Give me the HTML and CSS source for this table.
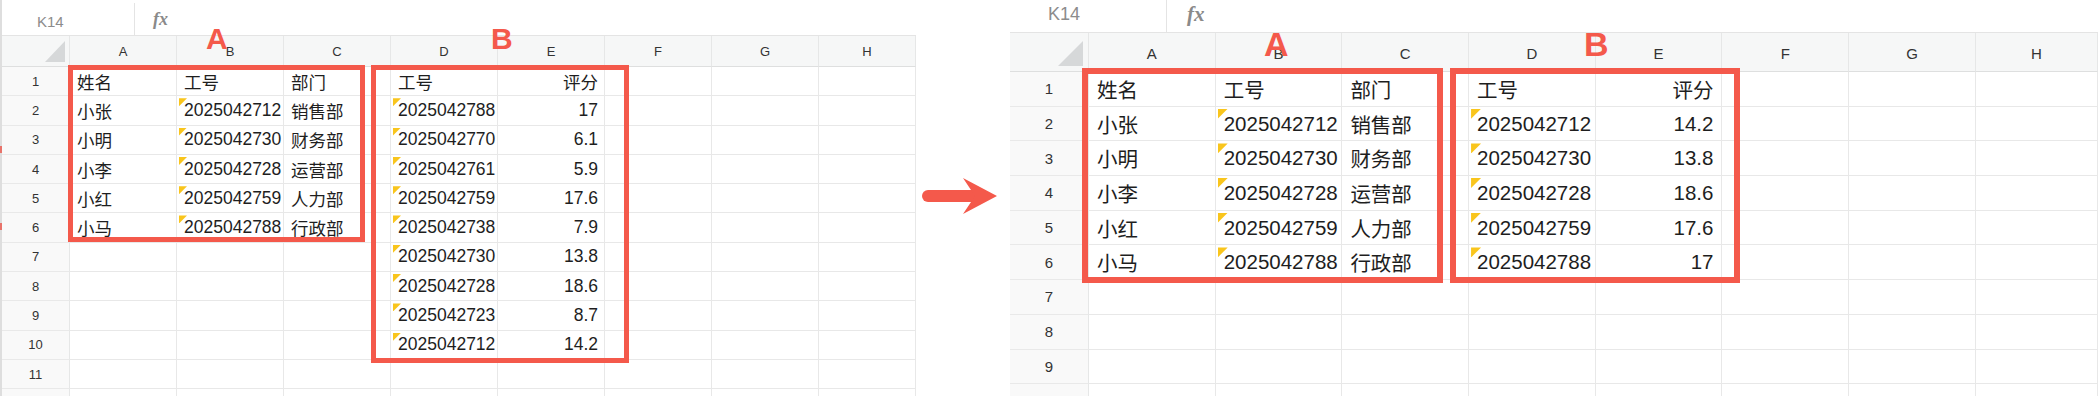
FILE: index.html
```html
<!DOCTYPE html>
<html lang="zh-CN">
<head>
<meta charset="utf-8">
<title>工号匹配</title>
<link rel="stylesheet" href="styles.css">
</head>
<body>
<div class="edge"><span class="mark m1"></span><span class="mark m2"></span></div>

<section class="sheet left">
  <div class="toolbar">
    <div class="namebox">K14</div>
    <div class="fx">fx</div>
  </div>
  <div class="grid">
    <div class="corner"></div><div class="ch">A</div><div class="ch">B</div><div class="ch">C</div><div class="ch">D</div><div class="ch">E</div><div class="ch">F</div><div class="ch">G</div><div class="ch">H</div>

    <div class="rn">1</div><div class="c">姓名</div><div class="c">工号</div><div class="c">部门</div><div class="c">工号</div><div class="c num">评分</div><div class="c"></div><div class="c"></div><div class="c"></div>
    <div class="rn">2</div><div class="c">小张</div><div class="c t">2025042712</div><div class="c">销售部</div><div class="c t">2025042788</div><div class="c num">17</div><div class="c"></div><div class="c"></div><div class="c"></div>
    <div class="rn">3</div><div class="c">小明</div><div class="c t">2025042730</div><div class="c">财务部</div><div class="c t">2025042770</div><div class="c num">6.1</div><div class="c"></div><div class="c"></div><div class="c"></div>
    <div class="rn">4</div><div class="c">小李</div><div class="c t">2025042728</div><div class="c">运营部</div><div class="c t">2025042761</div><div class="c num">5.9</div><div class="c"></div><div class="c"></div><div class="c"></div>
    <div class="rn">5</div><div class="c">小红</div><div class="c t">2025042759</div><div class="c">人力部</div><div class="c t">2025042759</div><div class="c num">17.6</div><div class="c"></div><div class="c"></div><div class="c"></div>
    <div class="rn">6</div><div class="c">小马</div><div class="c t">2025042788</div><div class="c">行政部</div><div class="c t">2025042738</div><div class="c num">7.9</div><div class="c"></div><div class="c"></div><div class="c"></div>
    <div class="rn">7</div><div class="c"></div><div class="c"></div><div class="c"></div><div class="c t">2025042730</div><div class="c num">13.8</div><div class="c"></div><div class="c"></div><div class="c"></div>
    <div class="rn">8</div><div class="c"></div><div class="c"></div><div class="c"></div><div class="c t">2025042728</div><div class="c num">18.6</div><div class="c"></div><div class="c"></div><div class="c"></div>
    <div class="rn">9</div><div class="c"></div><div class="c"></div><div class="c"></div><div class="c t">2025042723</div><div class="c num">8.7</div><div class="c"></div><div class="c"></div><div class="c"></div>
    <div class="rn">10</div><div class="c"></div><div class="c"></div><div class="c"></div><div class="c t">2025042712</div><div class="c num">14.2</div><div class="c"></div><div class="c"></div><div class="c"></div>
    <div class="rn">11</div><div class="c"></div><div class="c"></div><div class="c"></div><div class="c"></div><div class="c"></div><div class="c"></div><div class="c"></div><div class="c"></div>
    <div class="rn"></div><div class="c"></div><div class="c"></div><div class="c"></div><div class="c"></div><div class="c"></div><div class="c"></div><div class="c"></div><div class="c"></div>
  </div>
  <div class="box box-a"></div>
  <div class="box box-b"></div>
  <div class="label label-a">A</div>
  <div class="label label-b">B</div>
</section>

<div class="arrow-col">
  <svg class="arrow" width="80" height="40" viewBox="0 0 80 40" aria-hidden="true">
    <path d="M8 14 H56 V26 H8 A6 6 0 0 1 8 14 Z" fill="#f4594b"/>
    <path d="M43 2 L77 20 L43 38 L55 20 Z" fill="#f4594b"/>
  </svg>
</div>

<section class="sheet right">
  <div class="toolbar">
    <div class="namebox">K14</div>
    <div class="fx">fx</div>
  </div>
  <div class="grid">
    <div class="corner"></div><div class="ch">A</div><div class="ch">B</div><div class="ch">C</div><div class="ch">D</div><div class="ch">E</div><div class="ch">F</div><div class="ch">G</div><div class="ch">H</div>

    <div class="rn">1</div><div class="c">姓名</div><div class="c">工号</div><div class="c">部门</div><div class="c">工号</div><div class="c num">评分</div><div class="c"></div><div class="c"></div><div class="c"></div>
    <div class="rn">2</div><div class="c">小张</div><div class="c t">2025042712</div><div class="c">销售部</div><div class="c t">2025042712</div><div class="c num">14.2</div><div class="c"></div><div class="c"></div><div class="c"></div>
    <div class="rn">3</div><div class="c">小明</div><div class="c t">2025042730</div><div class="c">财务部</div><div class="c t">2025042730</div><div class="c num">13.8</div><div class="c"></div><div class="c"></div><div class="c"></div>
    <div class="rn">4</div><div class="c">小李</div><div class="c t">2025042728</div><div class="c">运营部</div><div class="c t">2025042728</div><div class="c num">18.6</div><div class="c"></div><div class="c"></div><div class="c"></div>
    <div class="rn">5</div><div class="c">小红</div><div class="c t">2025042759</div><div class="c">人力部</div><div class="c t">2025042759</div><div class="c num">17.6</div><div class="c"></div><div class="c"></div><div class="c"></div>
    <div class="rn">6</div><div class="c">小马</div><div class="c t">2025042788</div><div class="c">行政部</div><div class="c t">2025042788</div><div class="c num">17</div><div class="c"></div><div class="c"></div><div class="c"></div>
    <div class="rn">7</div><div class="c"></div><div class="c"></div><div class="c"></div><div class="c"></div><div class="c"></div><div class="c"></div><div class="c"></div><div class="c"></div>
    <div class="rn">8</div><div class="c"></div><div class="c"></div><div class="c"></div><div class="c"></div><div class="c"></div><div class="c"></div><div class="c"></div><div class="c"></div>
    <div class="rn">9</div><div class="c"></div><div class="c"></div><div class="c"></div><div class="c"></div><div class="c"></div><div class="c"></div><div class="c"></div><div class="c"></div>
    <div class="rn"></div><div class="c"></div><div class="c"></div><div class="c"></div><div class="c"></div><div class="c"></div><div class="c"></div><div class="c"></div><div class="c"></div>
  </div>
  <div class="box box-a"></div>
  <div class="box box-b"></div>
  <div class="label label-a">A</div>
  <div class="label label-b">B</div>
</section>
</body>
</html>
```

FILE: styles.css
```css
* {
  box-sizing: border-box;
  margin: 0;
  padding: 0;
}

html,
body {
  width: 2098px;
  height: 396px;
  overflow: hidden;
  background: #ffffff;
}

body {
  display: flex;
  align-items: flex-start;
  font-family: "Liberation Sans", "Noto Sans CJK SC", Arial, sans-serif;
  color: #1e1e1e;
}

/* thin edge of the neighbouring picture */
.edge {
  position: relative;
  flex: none;
  width: 2px;
  height: 396px;
  background: #dedede;
}

.mark {
  position: absolute;
  left: 0;
  width: 2px;
  height: 7px;
  background: #e8736a;
}

.m1 { top: 146px; }
.m2 { top: 223px; }

/* sheets */
.sheet {
  position: relative;
  flex: none;
  display: flex;
  flex-direction: column;
  height: 396px;
  overflow: hidden;
}

.left { width: 914px; }
.right { width: 1088px; }

.toolbar {
  flex: none;
  display: flex;
  border-bottom: 1px solid #e4e4e4;
}

.left .toolbar { height: 36px; }
.right .toolbar { height: 33px; }

.namebox {
  display: flex;
  align-items: center;
  border-right: 1px solid #e4e4e4;
  color: #8c8c8c;
}

.left .namebox {
  width: 133px;
  margin-top: 3px;
  padding: 4px 0 0 35px;
  font-size: 15px;
}

.right .namebox {
  width: 157px;
  padding: 0 0 3px 38px;
  font-size: 18px;
}

.fx {
  display: flex;
  align-items: center;
  font-family: "Liberation Serif", serif;
  font-style: italic;
  font-weight: bold;
  color: #8a8a8a;
}

.left .fx {
  padding: 3px 0 0 18px;
  font-size: 18px;
}

.right .fx {
  padding: 0 0 4px 20px;
  font-size: 21px;
}

/* grid */
.grid {
  display: grid;
}

.left .grid {
  grid-template-columns: 68px repeat(7, 107px) 97px;
  grid-template-rows: 31px;
  grid-auto-rows: 29.3px;
}

.right .grid {
  grid-template-columns: 79px repeat(7, 126.7px) 122px;
  grid-template-rows: 39px;
  grid-auto-rows: 34.7px;
}

.corner,
.ch {
  background: #f6f7f7;
  border-right: 1px solid #e6e7e7;
  border-bottom: 1px solid #dedfdf;
}

.corner {
  position: relative;
}

.corner::after {
  content: "";
  position: absolute;
  background: #d6d8d9;
  clip-path: polygon(100% 0, 100% 100%, 0 100%);
}

.left .corner::after {
  right: 4px;
  bottom: 4px;
  width: 20px;
  height: 21px;
}

.right .corner::after {
  right: 5px;
  bottom: 5px;
  width: 25px;
  height: 25px;
}

.ch {
  display: flex;
  align-items: center;
  justify-content: center;
  color: #333333;
}

.left .ch { font-size: 13px; padding-top: 1px; }
.right .ch { font-size: 15px; padding-top: 2px; }

.rn {
  display: flex;
  align-items: center;
  justify-content: center;
  background: #f9f9f9;
  border-right: 1px solid #e6e7e7;
  border-bottom: 1px solid #e9e9e9;
  color: #333333;
}

.left .rn { font-size: 13px; }
.right .rn { font-size: 15px; }

.c {
  position: relative;
  display: flex;
  align-items: center;
  white-space: nowrap;
  border-right: 1px solid #e8e8e8;
  border-bottom: 1px solid #e8e8e8;
}

.left .c {
  padding: 0 6px 0 7px;
  font-size: 17.5px;
}

.right .c {
  padding: 0 8px;
  font-size: 20.5px;
}

.c.num {
  justify-content: flex-end;
}

.c.t::before {
  content: "";
  position: absolute;
  top: 2px;
  left: 2px;
  background: #f9c51c;
  clip-path: polygon(0 0, 100% 0, 0 100%);
}

.left .c.t::before {
  width: 8px;
  height: 8px;
}

.right .c.t::before {
  width: 10px;
  height: 10px;
}

/* annotation overlays */
.box {
  position: absolute;
  border: 5px solid #f4594b;
}

.left .box-a {
  left: 66px;
  top: 65px;
  width: 297px;
  height: 177px;
}

.left .box-b {
  left: 369px;
  top: 65px;
  width: 258px;
  height: 298px;
}

.right .box {
  border-width: 6px;
}

.right .box-a {
  left: 72px;
  top: 68px;
  width: 361px;
  height: 215px;
}

.right .box-b {
  left: 440px;
  top: 68px;
  width: 290px;
  height: 215px;
}

.label {
  position: absolute;
  color: #f4594b;
  font-family: "Liberation Sans", Arial, sans-serif;
  font-weight: bold;
  line-height: 1;
}

.left .label {
  top: 24px;
  font-size: 30px;
}

.left .label-a { left: 204px; }
.left .label-b { left: 489px; }

.right .label {
  top: 27px;
  font-size: 34px;
}

.right .label-a { left: 254px; }
.right .label-b { left: 574px; }

/* arrow between the two sheets */
.arrow-col {
  flex: none;
  width: 94px;
  height: 396px;
  padding: 176px 0 0 4px;
}

.arrow {
  display: block;
}
```
